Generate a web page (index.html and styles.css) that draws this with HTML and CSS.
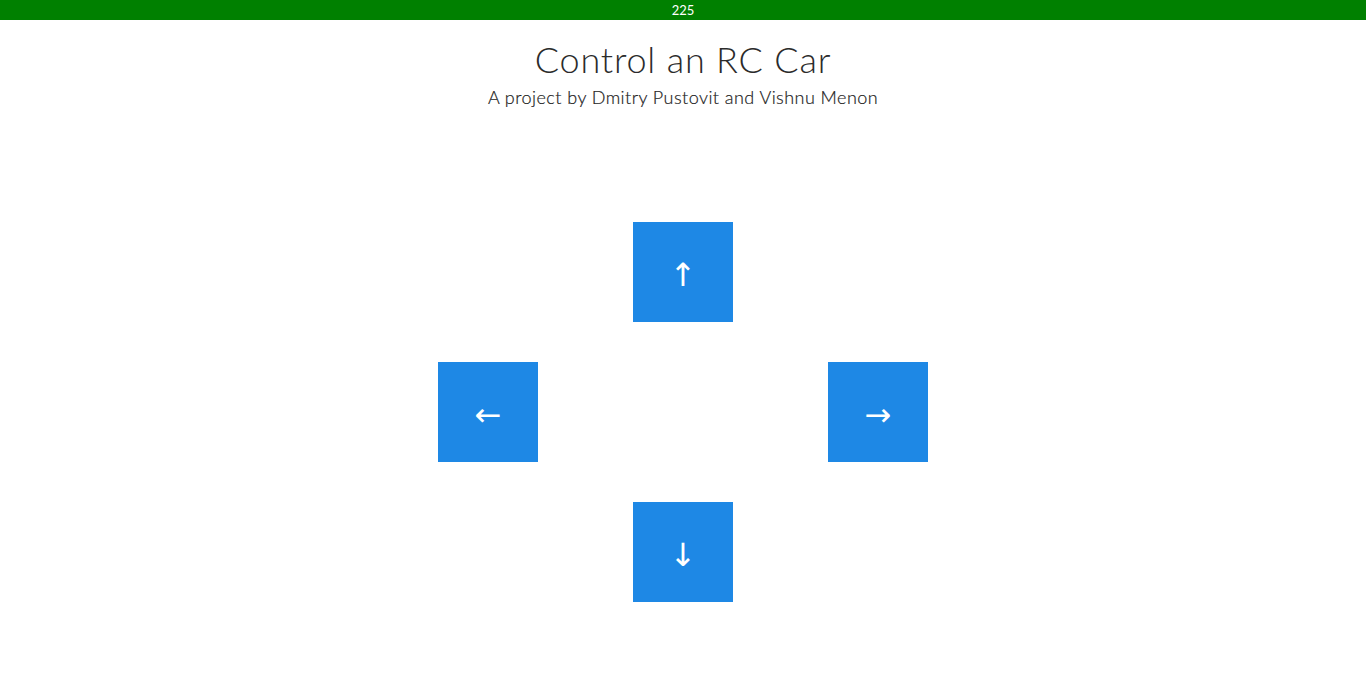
FILE: index.html
```html
<!DOCTYPE html>
<html>
<head>
<meta charset="utf-8">
<link rel="stylesheet" href="styles.css">
</head>
<body>
<div class="status">225</div>
<header class="head">
  <h1 class="title">Control an RC Car</h1>
  <p class="subtitle">A project by Dmitry Pustovit and Vishnu Menon</p>
</header>
<main class="pad">
  <button class="key up">↑</button>
  <button class="key left">←</button>
  <button class="key right">→</button>
  <button class="key down">↓</button>
</main>
</body>
</html>
```
FILE: styles.css
```css
html, body { margin: 0; padding: 0; background: #fff; }
body { font-family: "Lato", "Open Sans", sans-serif; color: #333; }
.status {
  height: 20px;
  background: #008000;
  color: #fff;
  font-size: 13px;
  line-height: 21px;
  text-align: center;
}
.head { text-align: center; }
.title {
  margin: 17px 0 0;
  font-size: 36px;
  font-weight: 300;
  letter-spacing: 0.8px;
  line-height: 44px;
  color: #2b2b2b;
}
.subtitle {
  margin: 4px 0 0;
  font-size: 18px;
  font-weight: 300;
  letter-spacing: 0.45px;
  line-height: 24px;
  color: #222;
  -webkit-text-stroke: 0.2px #222;
}
.pad {
  display: grid;
  grid-template-columns: repeat(3, 100px);
  grid-template-rows: repeat(3, 100px);
  column-gap: 95px;
  row-gap: 40px;
  justify-content: center;
  margin-top: 113px;
}
.key {
  width: 100px;
  height: 100px;
  border: 0;
  padding: 6px 0 0;
  background: #1e88e5;
  color: #fff;
  font-family: "DejaVu Sans", sans-serif;
  font-size: 32px;
  cursor: pointer;
}
.up { grid-column: 2; grid-row: 1; }
.left { grid-column: 1; grid-row: 2; }
.right { grid-column: 3; grid-row: 2; }
.down { grid-column: 2; grid-row: 3; }
```
